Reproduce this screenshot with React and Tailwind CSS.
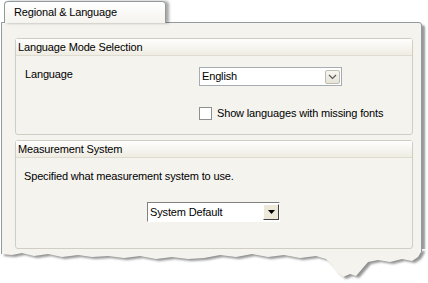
import React from "react";

const edge = [
  [421, 3], [418, 8], [412, 12], [402, 10], [390, 13], [378, 11], [368, 13], [362, 20],
  [356, 27], [350, 25], [343, 28], [337, 23], [332, 16], [326, 10], [316, 7], [300, 9],
  [284, 6], [268, 8], [252, 5], [236, 8], [220, 6], [204, 9], [188, 10], [172, 8],
  [156, 10], [140, 7], [124, 9], [108, 7], [92, 8], [78, 6], [62, 8], [48, 5],
  [34, 7], [22, 4], [12, 6], [1, 5],
];

function TornEdge() {
  const shape = "1,0 422,0 " + edge.map((p) => p.join(",")).join(" ");
  return (
    <svg className="absolute left-0 top-[249px]" width="428" height="34" viewBox="0 0 428 34">
      <defs>
        <filter id="blur" x="-10%" y="-50%" width="120%" height="200%">
          <feGaussianBlur stdDeviation="1.2" />
        </filter>
      </defs>
      <rect x="0" y="0" width="428" height="34" fill="#ffffff" />
      <polygon points={shape} fill="#6f6f6f" opacity="0.75" transform="translate(3,2)" filter="url(#blur)" />
      <polygon points={shape} fill="#f4f3ee" />
      <line x1="1.5" y1="0" x2="1.5" y2="5" stroke="#919b9c" />
      <line x1="421.5" y1="0" x2="421.5" y2="3" stroke="#919b9c" />
    </svg>
  );
}

function GroupBox({ title, className, children }) {
  return (
    <div className={`rounded-[3px] border border-[#d0cec4] bg-[#f4f3ee] ${className}`}>
      <div className="flex h-[17px] items-center border-b border-[#dedbd0] bg-gradient-to-b from-[#fefefd] to-[#efece3] pl-[2px]">
        {title}
      </div>
      {children}
    </div>
  );
}

export default function App() {
  return (
    <div className="relative h-[283px] w-[428px] overflow-hidden bg-white font-['Liberation_Sans',Arial,sans-serif] text-[11px] leading-[13px] tracking-[-0.15px] text-black">
      <div className="relative z-10 -mb-px ml-[4px] mt-[1px] flex h-[22px] w-[162px] items-center rounded-t-[4px] border border-b-0 border-[#919b9c] bg-gradient-to-b from-white to-[#f4f3ee] pl-[9px] shadow-[3px_0_3px_rgba(0,0,0,0.35)]">
        Regional &amp; Language
      </div>

      <div className="ml-[1px] h-[230px] w-[421px] rounded-tr-[3px] border border-[#919b9c] bg-[#f4f3ee] pl-[13px] pr-[8px] pt-[15px] shadow-[3px_3px_2px_rgba(0,0,0,0.4)]">
        <GroupBox title="Language Mode Selection" className="h-[97px]">
          <div className="flex items-start pt-[11px]">
            <div className="w-[183px] pl-[9px] pt-px">Language</div>
            <div className="flex h-[19px] w-[143px] items-center justify-between border border-[#a5acb2] bg-white pl-[2px] pr-px">
              <span>English</span>
              <div className="flex h-[14px] w-[15px] items-center justify-center rounded-[2px] border border-[#bfbdb2] bg-gradient-to-b from-[#f7f6f2] to-[#e6e3d8]">
                <svg width="9" height="6" viewBox="0 0 9 6">
                  <polyline points="1,1 4.5,4.5 8,1" fill="none" stroke="#5a5a5a" strokeWidth="1.2" />
                </svg>
              </div>
            </div>
          </div>
          <div className="mt-[21px] flex items-center pl-[183px]">
            <div className="h-[13px] w-[13px] border border-[#8e8f8f] bg-white" />
            <span className="ml-[5px]">Show languages with missing fonts</span>
          </div>
        </GroupBox>

        <GroupBox title="Measurement System" className="mt-[5px] h-[109px]">
          <div className="pl-[8px] pt-[12px]">Specified what measurement system to use.</div>
          <div className="ml-[131px] mt-[19px] flex h-[20px] w-[133px] items-center justify-between border border-b-white border-l-[#808080] border-r-white border-t-[#808080] bg-white pl-[2px]">
            <span>System Default</span>
            <div className="flex h-[16px] w-[16px] items-center justify-center border border-b-[#404040] border-l-white border-r-[#404040] border-t-white bg-[#ece9d8]">
              <svg width="7" height="4" viewBox="0 0 7 4">
                <polygon points="0,0 7,0 3.5,4" fill="#000" />
              </svg>
            </div>
          </div>
        </GroupBox>
      </div>

      <TornEdge />
    </div>
  );
}
